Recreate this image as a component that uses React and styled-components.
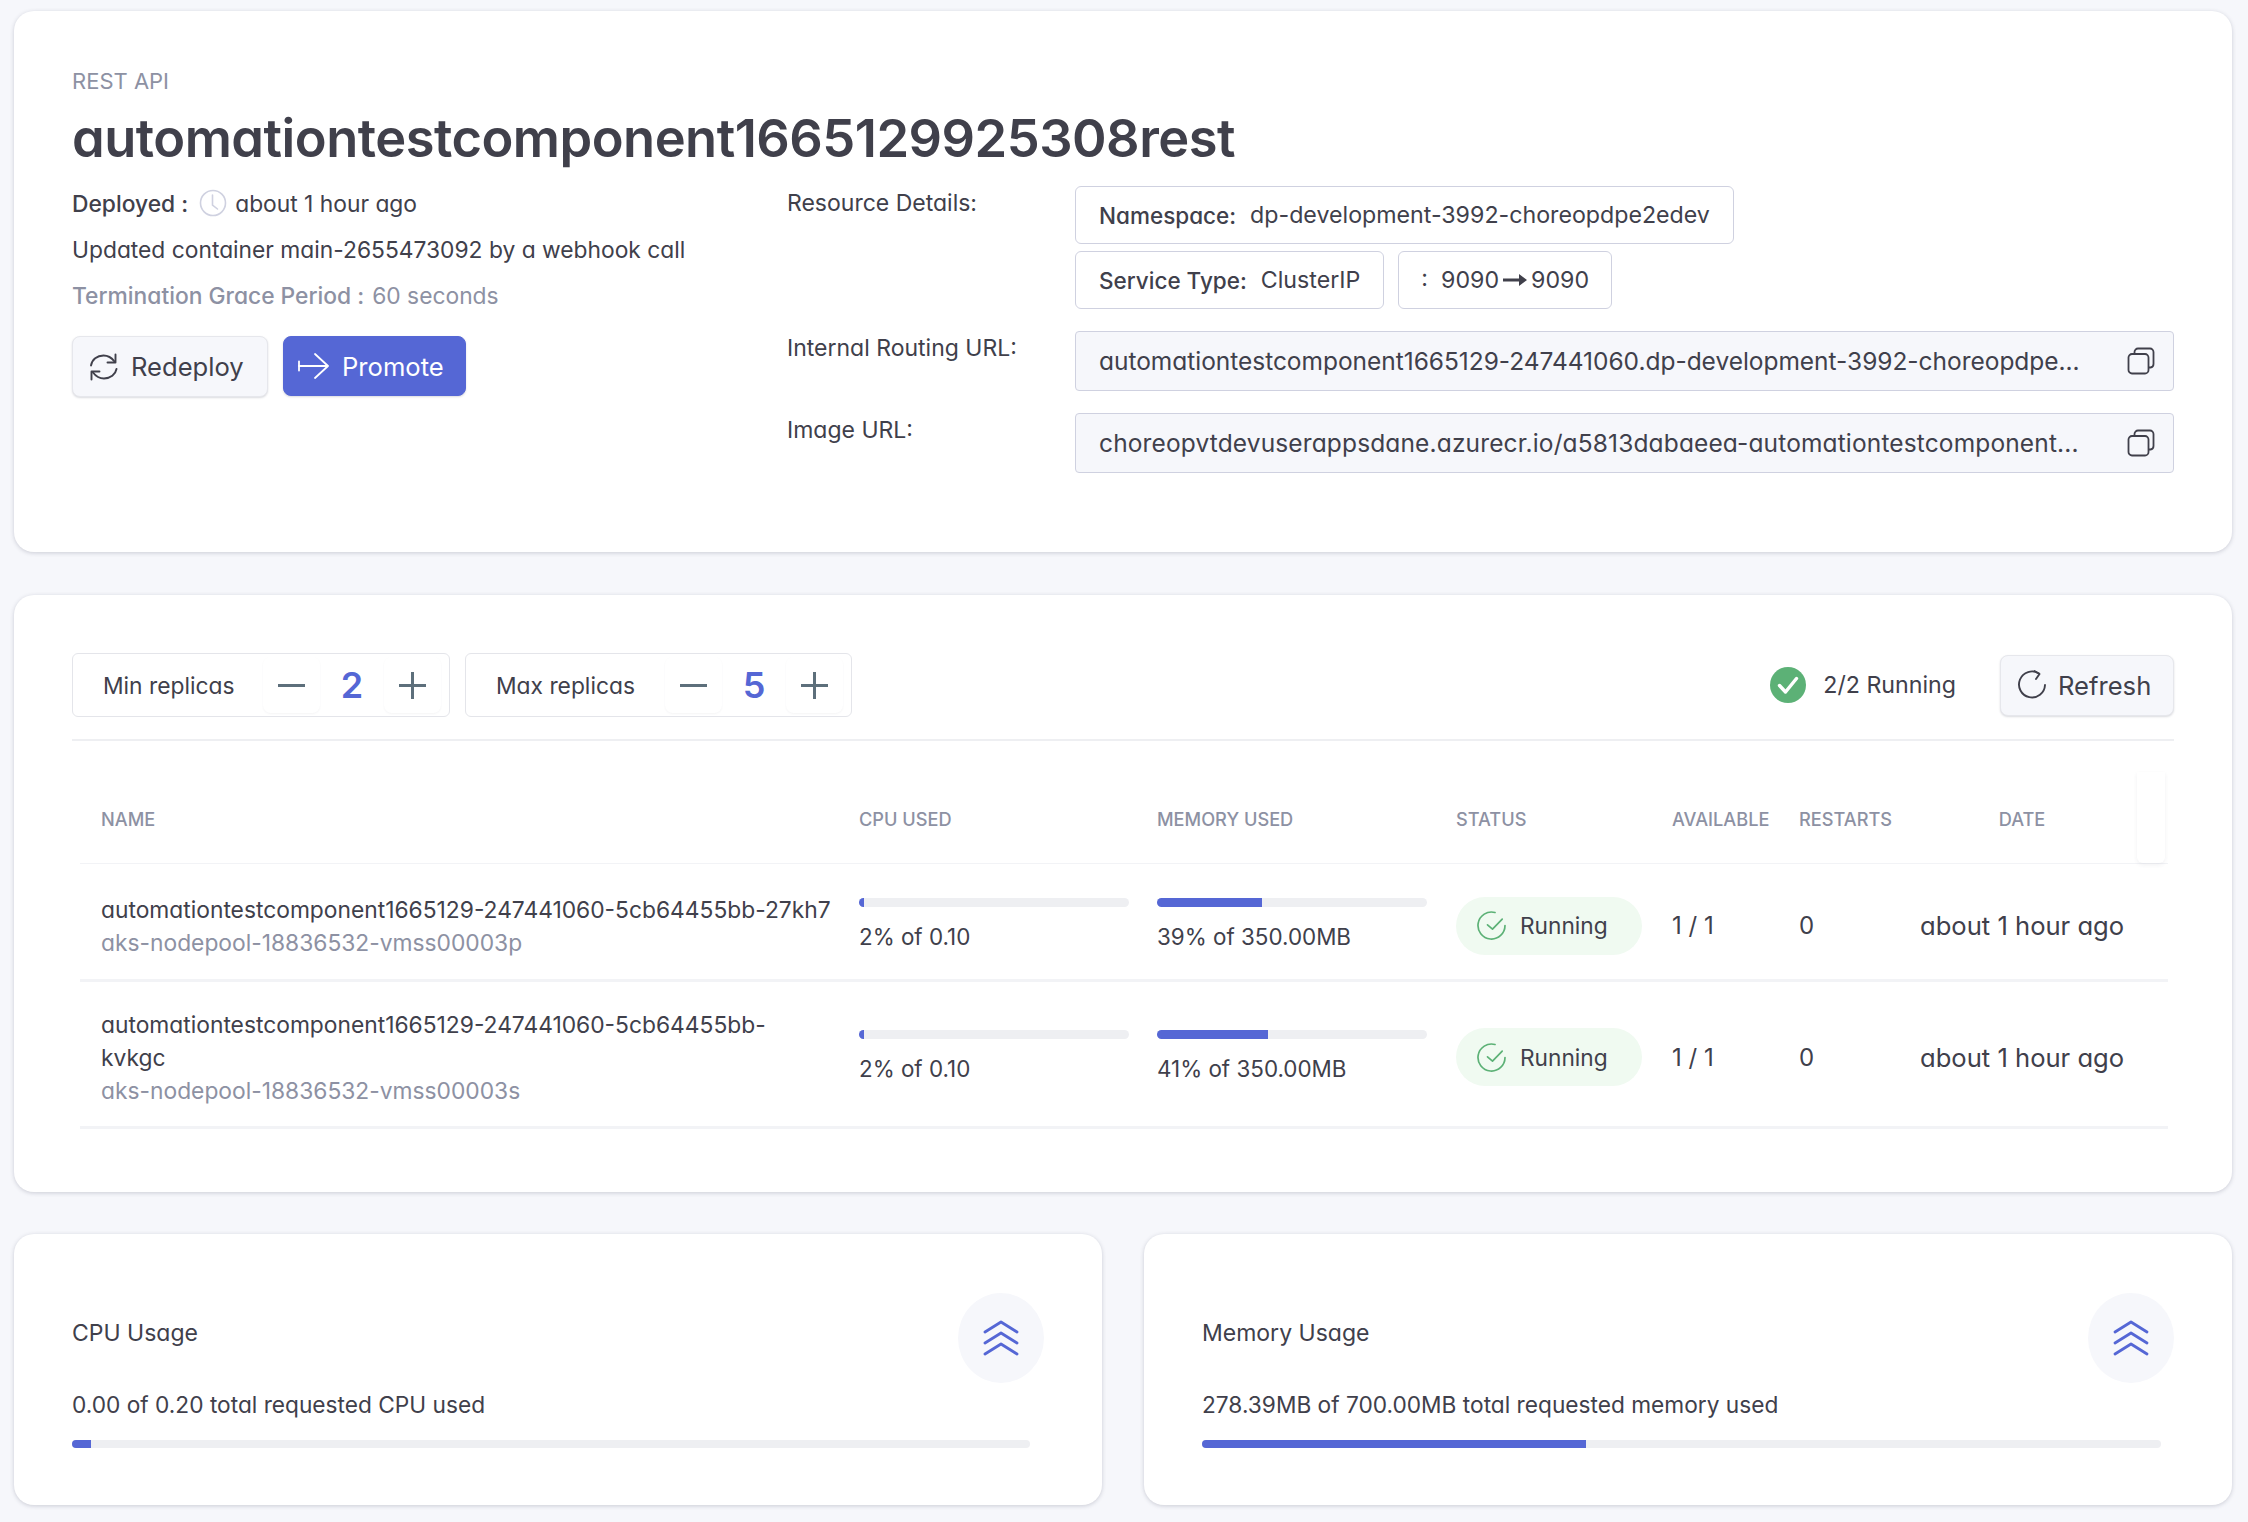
import styled, { createGlobalStyle } from "styled-components";

const GlobalStyle = createGlobalStyle`
    * { box-sizing: border-box; }
    body {
        margin: 0;
        background: #f6f7fb;
        color: #40404b;
        font-family: "Inter", "Open Sans", sans-serif;
        font-feature-settings: "cv11" 1;
        font-size: 22.8px;
    }
`;

const Page = styled.div`
    width: 2248px;
    height: 1522px;
    padding: 11px 16px 0 14px;
    display: flex;
    flex-direction: column;
`;

const Card = styled.section`
    background: #fff;
    border-radius: 20px;
    box-shadow: 0 1px 4px rgba(50, 55, 80, 0.22);
`;

const Overview = styled(Card)`
    height: 541px;
    padding: 56px 58px 0;
    display: flex;
`;

const Summary = styled.div`
    width: 715px;
    flex-shrink: 0;
`;

const Kicker = styled.div`
    font-size: 22px;
    line-height: 28px;
    color: #8d91a3;
`;

const Title = styled.h1`
    margin: 9px 0 0;
    font-size: 52.4px;
    line-height: 68px;
    font-weight: 600;
    letter-spacing: -0.5px;
    white-space: nowrap;
`;

const InfoLine = styled.div`
    display: flex;
    align-items: center;
    height: 46px;
    color: ${(p) => (p.$muted ? "#8d91a3" : "#40404b")};
    b { font-weight: 500; margin-right: 8px; }
    svg { margin: 0 8px 0 3px; }
`;

const InfoLines = styled.div`
    margin-top: 8px;
`;

const Buttons = styled.div`
    display: flex;
    gap: 15px;
    margin-top: 18px;
`;

const Button = styled.button`
    width: ${(p) => (p.$primary ? 183 : 196)}px;
    height: ${(p) => (p.$primary ? 60 : 61)}px;
    padding: 0 0 0 ${(p) => (p.$primary ? 14 : 16)}px;
    display: flex;
    align-items: center;
    gap: 12px;
    font: inherit;
    font-size: 25.6px;
    border-radius: 8px;
    color: ${(p) => (p.$primary ? "#fff" : "#40404b")};
    background: ${(p) => (p.$primary ? "#5567d5" : "#f6f7fb")};
    border: 1px solid ${(p) => (p.$primary ? "#5567d5" : "#e6e7ec")};
    box-shadow: 0 1px 2px rgba(50, 55, 80, 0.18);
`;

const Resources = styled.div`
    flex: 1;
    display: grid;
    grid-template-columns: 288px 1fr;
    align-content: start;
    margin-top: 119px;
`;

const ResourceLabel = styled.div`
    font-size: 23px;
    line-height: 34px;
    padding-top: ${(p) => p.$top || 0}px;
`;

const ChipRows = styled.div`
    display: flex;
    flex-direction: column;
    gap: 7px;
`;

const ChipRow = styled.div`
    display: flex;
    gap: 14px;
`;

const Chip = styled.div`
    height: 58px;
    padding: 0 23px;
    display: flex;
    align-items: center;
    font-size: 23.2px;
    white-space: nowrap;
    border: 1px solid #cfd1e0;
    border-radius: 6px;
    b { font-size: 22.5px; font-weight: 500; margin-right: 14px; }
    svg { margin: 0 4px; }
`;

const PortChip = styled(Chip)`
    padding: 0 22px;
`;

const UrlBox = styled.div`
    height: 60px;
    margin-top: ${(p) => p.$top}px;
    padding: 0 18px 0 23px;
    display: flex;
    align-items: center;
    justify-content: space-between;
    font-size: 24.5px;
    letter-spacing: ${(p) => p.$spacing}px;
    white-space: nowrap;
    background: #f6f7fb;
    border: 1px solid #cfd1e0;
    border-radius: 4px;
`;

const Pods = styled(Card)`
    height: 597px;
    margin-top: 43px;
    padding: 59px 58px 0;
`;

const Toolbar = styled.div`
    height: 87px;
    padding-bottom: 23px;
    display: flex;
    align-items: center;
    border-bottom: 2px solid #eeeff2;
`;

const ReplicaBox = styled.div`
    width: ${(p) => p.$width}px;
    height: 64px;
    margin-right: 15px;
    padding-left: 30px;
    display: flex;
    align-items: center;
    border: 1px solid #e4e5ea;
    border-radius: 6px;
`;

const ReplicaLabel = styled.span`
    flex: 1;
`;

const StepButton = styled.span`
    width: 57px;
    height: 56px;
    margin-right: ${(p) => p.$end || 0}px;
    display: flex;
    align-items: center;
    justify-content: center;
    border-radius: 8px;
    box-shadow: 0 1px 2px rgba(50, 55, 80, 0.05);
`;

const ReplicaValue = styled.span`
    width: 64px;
    text-align: center;
    font-size: 36px;
    font-weight: 600;
    color: #5567d5;
`;

const Spacer = styled.div`
    flex: 1;
`;

const RunningSummary = styled.div`
    display: flex;
    align-items: center;
    gap: 17px;
    margin-right: 44px;
    font-size: 23.2px;
`;

const RefreshButton = styled(Button)`
    height: 61px;
    width: 174px;
    padding: 0 16px;
    gap: 11px;
`;

const Row = styled.div`
    margin: 0 6px 0 8px;
    display: grid;
    grid-template-columns: 758px 298px 299px 216px 127px 121px 238px 28px;
    align-items: center;
    height: ${(p) => p.$height}px;
    padding-top: ${(p) => p.$pad || 0}px;
    border-bottom: ${(p) => (p.$thick ? 3 : 1)}px solid #f2f3f6;
`;

const HeadRow = styled(Row)`
    margin-top: 31px;
    font-size: 18.2px;
    font-weight: 500;
    color: #8d91a3;
`;

const HeadCell = styled.div`
    padding-left: ${(p) => (p.$center ? 8 : 21)}px;
    padding-top: 3px;
    text-align: ${(p) => (p.$center ? "center" : "left")};
    white-space: nowrap;
`;

const StickyEnd = styled.div`
    height: 100%;
    border-radius: 0 0 6px 6px;
    box-shadow: 0 2px 4px rgba(50, 55, 80, 0.07);
`;

const Cell = styled.div`
    padding-left: 21px;
    font-size: ${(p) => p.$size || 22.8}px;
    grid-column: ${(p) => p.$span || "auto"};
`;

const PodName = styled.div`
    line-height: 33px;
    width: ${(p) => p.$width || "auto"};
    white-space: ${(p) => (p.$wrap ? "normal" : "nowrap")};
    overflow-wrap: anywhere;
`;

const PodNode = styled.div`
    line-height: 33px;
    color: #8d91a3;
`;

const Track = styled.div`
    height: ${(p) => p.$h || 9}px;
    width: ${(p) => p.$width || 270}px;
    background: #eeeff2;
    border-radius: 5px;
    overflow: hidden;
`;

const Fill = styled.div`
    height: 100%;
    background: #5567d5;
`;

const MeterText = styled.div`
    margin-top: 16px;
    line-height: 28px;
    font-size: 22.4px;
`;

const Meter = styled.div`
    margin-bottom: ${(p) => p.$bottom}px;
`;

const StatusPill = styled.div`
    width: 186px;
    height: 58px;
    padding-left: 21px;
    display: flex;
    align-items: center;
    gap: 14px;
    font-size: 22.7px;
    background: #f0faf1;
    border-radius: 29px;
`;

const Usage = styled.div`
    display: grid;
    grid-template-columns: 1088px 1088px;
    gap: 42px;
    margin-top: 42px;
`;

const UsageCard = styled(Card)`
    height: 271px;
    padding: 59px 58px 0;
`;

const UsageHead = styled.div`
    display: flex;
    align-items: center;
    justify-content: space-between;
    font-size: 23px;
    span { padding-bottom: 10px; }
`;

const UsageIcon = styled.div`
    width: 86px;
    height: 90px;
    border-radius: 50%;
    background: #f6f7fb;
    display: flex;
    align-items: center;
    justify-content: center;
`;

const UsageText = styled.div`
    margin-top: 5px;
    line-height: 34px;
    font-size: 22.7px;
`;

const UsageBar = styled.div`
    margin-top: 18px;
`;

const ClockIcon = () => (
    <svg width="28" height="28" viewBox="0 0 28 28" fill="none" stroke="#cfd1e0" strokeWidth="1.6" strokeLinecap="round">
        <circle cx="14" cy="14" r="12.5" />
        <path d="M13.5 6v10l5 4" />
    </svg>
);

const RedeployIcon = () => (
    <svg width="30" height="30" viewBox="0 0 30 30" fill="none" stroke="#40404b" strokeWidth="1.9" strokeLinecap="round" strokeLinejoin="round">
        <path d="M2 13.5C3 7.5 8 3.5 14.5 3.5c4.5 0 8 2 11 6" />
        <path d="M26.500 2.500v8h-8" />
        <path d="M27.500 17c-1 5.500-6 9.500-12.500 9.500-4.500 0-8-2-11-6" />
        <path d="M2.500 27.500V19.500h8" />
    </svg>
);

const PromoteIcon = () => (
    <svg width="32" height="26" viewBox="0 0 32 26" fill="none" stroke="#fff" strokeWidth="1.8" strokeLinecap="round" strokeLinejoin="round">
        <path d="M1 8.500v9" />
        <path d="M1 13h28" />
        <path d="M17 1l13 12-13 12" />
    </svg>
);

const CopyIcon = () => (
    <svg width="28" height="28" viewBox="0 0 28 28" fill="none" stroke="#40404b" strokeWidth="1.8" strokeLinejoin="round">
        <rect x="1.500" y="7" width="20" height="19.500" rx="3.500" />
        <path d="M7.500 7V5a3.500 3.500 0 0 1 3.500-3.500h12A3.500 3.500 0 0 1 26.500 5v12a3.500 3.500 0 0 1-3 3.500h-2" />
    </svg>
);

const PortArrow = () => (
    <svg width="24" height="14" viewBox="0 0 24 14" fill="#40404b">
        <path d="M0 5.500h16V1l8 6-8 6V8.500H0z" />
    </svg>
);

const MinusIcon = () => (
    <svg width="27" height="27" viewBox="0 0 27 27" stroke="#5d6f7b" strokeWidth="3">
        <path d="M0 13.500h27" />
    </svg>
);

const PlusIcon = () => (
    <svg width="27" height="27" viewBox="0 0 27 27" stroke="#5d6f7b" strokeWidth="3">
        <path d="M0 13.500h27M13.500 0v27" />
    </svg>
);

const GreenCheck = () => (
    <svg width="36" height="36" viewBox="0 0 36 36" fill="none">
        <circle cx="18" cy="18" r="18" fill="#5cb176" />
        <path d="M9.500 18.500l6 6.500L26.500 11.500" stroke="#fff" strokeWidth="3.400" strokeLinecap="round" strokeLinejoin="round" />
    </svg>
);

const RefreshIcon = () => (
    <svg width="30" height="30" viewBox="0 0 30 30" fill="none" stroke="#40404b" strokeWidth="1.900" strokeLinecap="round" strokeLinejoin="round">
        <path d="M22 3.500A13 13 0 1 0 28 15" />
        <path d="M17.500 1l5 3-3.500 5" />
    </svg>
);

const RunningIcon = () => (
    <svg width="29" height="29" viewBox="0 0 29 29" fill="none" stroke="#5cb176" strokeWidth="1.700" strokeLinecap="round" strokeLinejoin="round">
        <path d="M18 1.500A13.500 13.500 0 1 0 28 14.500" />
        <path d="M10.500 13.800l5 4.400 9.700-10" />
    </svg>
);

const ChevronsIcon = () => (
    <svg width="36" height="36" viewBox="0 0 36 36" fill="none" stroke="#5567d5" strokeWidth="2.800" strokeLinecap="round" strokeLinejoin="round">
        <path d="M2 12L18 2l16 10" />
        <path d="M2 23l16-10 16 10" />
        <path d="M2 34l16-10 16 10" />
    </svg>
);

const pods = [
    { name: "automationtestcomponent1665129-247441060-5cb64455bb-27kh7", node: "aks-nodepool-18836532-vmss00003p", memory: 39, height: 118, pad: 8 },
    { name: "automationtestcomponent1665129-247441060-5cb64455bb-kvkgc", node: "aks-nodepool-18836532-vmss00003s", memory: 41, height: 147, pad: 6, wrap: true },
];

function Replica({ label, value, width }) {
    return (
        <ReplicaBox $width={width}>
            <ReplicaLabel>{label}</ReplicaLabel>
            <StepButton><MinusIcon /></StepButton>
            <ReplicaValue>{value}</ReplicaValue>
            <StepButton $end={8}><PlusIcon /></StepButton>
        </ReplicaBox>
    );
}

function App() {
    return (
        <>
            <GlobalStyle />
            <Page>
                <Overview>
                    <Summary>
                        <Kicker>REST API</Kicker>
                        <Title>automationtestcomponent1665129925308rest</Title>
                        <InfoLines>
                            <InfoLine><b>Deployed :</b><ClockIcon />about 1 hour ago</InfoLine>
                            <InfoLine>Updated container main-2655473092 by a webhook call</InfoLine>
                            <InfoLine $muted><b>Termination Grace Period :</b>60 seconds</InfoLine>
                        </InfoLines>
                        <Buttons>
                            <Button><RedeployIcon />Redeploy</Button>
                            <Button $primary><PromoteIcon />Promote</Button>
                        </Buttons>
                    </Summary>
                    <Resources>
                        <ResourceLabel>Resource Details:</ResourceLabel>
                        <ChipRows>
                            <ChipRow>
                                <Chip><b>Namespace:</b>dp-development-3992-choreopdpe2edev</Chip>
                            </ChipRow>
                            <ChipRow>
                                <Chip><b>Service Type:</b>ClusterIP</Chip>
                                <PortChip>:&nbsp;&nbsp;9090<PortArrow />9090</PortChip>
                            </ChipRow>
                        </ChipRows>
                        <ResourceLabel $top={22}>Internal Routing URL:</ResourceLabel>
                        <UrlBox $top={22} $spacing={-0.03}>
                            automationtestcomponent1665129-247441060.dp-development-3992-choreopdpe...
                            <CopyIcon />
                        </UrlBox>
                        <ResourceLabel $top={22}>Image URL:</ResourceLabel>
                        <UrlBox $top={22} $spacing={0.14}>
                            choreopvtdevuserappsdane.azurecr.io/a5813dabaeea-automationtestcomponent...
                            <CopyIcon />
                        </UrlBox>
                    </Resources>
                </Overview>

                <Pods>
                    <Toolbar>
                        <Replica label="Min replicas" value="2" width={378} />
                        <Replica label="Max replicas" value="5" width={387} />
                        <Spacer />
                        <RunningSummary><GreenCheck />2/2 Running</RunningSummary>
                        <RefreshButton><RefreshIcon />Refresh</RefreshButton>
                    </Toolbar>
                    <HeadRow $height={92}>
                        <HeadCell>NAME</HeadCell>
                        <HeadCell>CPU USED</HeadCell>
                        <HeadCell>MEMORY USED</HeadCell>
                        <HeadCell>STATUS</HeadCell>
                        <HeadCell>AVAILABLE</HeadCell>
                        <HeadCell>RESTARTS</HeadCell>
                        <HeadCell $center>DATE</HeadCell>
                        <StickyEnd />
                    </HeadRow>
                    {pods.map((pod) => (
                        <Row key={pod.name} $height={pod.height} $pad={pod.pad} $thick>
                            <Cell>
                                <PodName $wrap={pod.wrap} $width={pod.wrap ? "700px" : "auto"}>{pod.name}</PodName>
                                <PodNode>{pod.node}</PodNode>
                            </Cell>
                            <Cell>
                                <Meter $bottom={2}>
                                    <Track><Fill style={{ width: "2%" }} /></Track>
                                    <MeterText>2% of 0.10</MeterText>
                                </Meter>
                            </Cell>
                            <Cell>
                                <Meter $bottom={2}>
                                    <Track><Fill style={{ width: `${pod.memory}%` }} /></Track>
                                    <MeterText>{pod.memory}% of 350.00MB</MeterText>
                                </Meter>
                            </Cell>
                            <Cell>
                                <StatusPill><RunningIcon />Running</StatusPill>
                            </Cell>
                            <Cell $size={24}>1 / 1</Cell>
                            <Cell $size={24}>0</Cell>
                            <Cell $size={25.6} $span="span 2">about 1 hour ago</Cell>
                        </Row>
                    ))}
                </Pods>

                <Usage>
                    <UsageCard>
                        <UsageHead>
                            <span>CPU Usage</span>
                            <UsageIcon><ChevronsIcon /></UsageIcon>
                        </UsageHead>
                        <UsageText>0.00 of 0.20 total requested CPU used</UsageText>
                        <UsageBar><Track $h={8} $width={958}><Fill style={{ width: "2%" }} /></Track></UsageBar>
                    </UsageCard>
                    <UsageCard>
                        <UsageHead>
                            <span>Memory Usage</span>
                            <UsageIcon><ChevronsIcon /></UsageIcon>
                        </UsageHead>
                        <UsageText>278.39MB of 700.00MB total requested memory used</UsageText>
                        <UsageBar><Track $h={8} $width={959}><Fill style={{ width: "40%" }} /></Track></UsageBar>
                    </UsageCard>
                </Usage>
            </Page>
        </>
    );
}

export default App;
